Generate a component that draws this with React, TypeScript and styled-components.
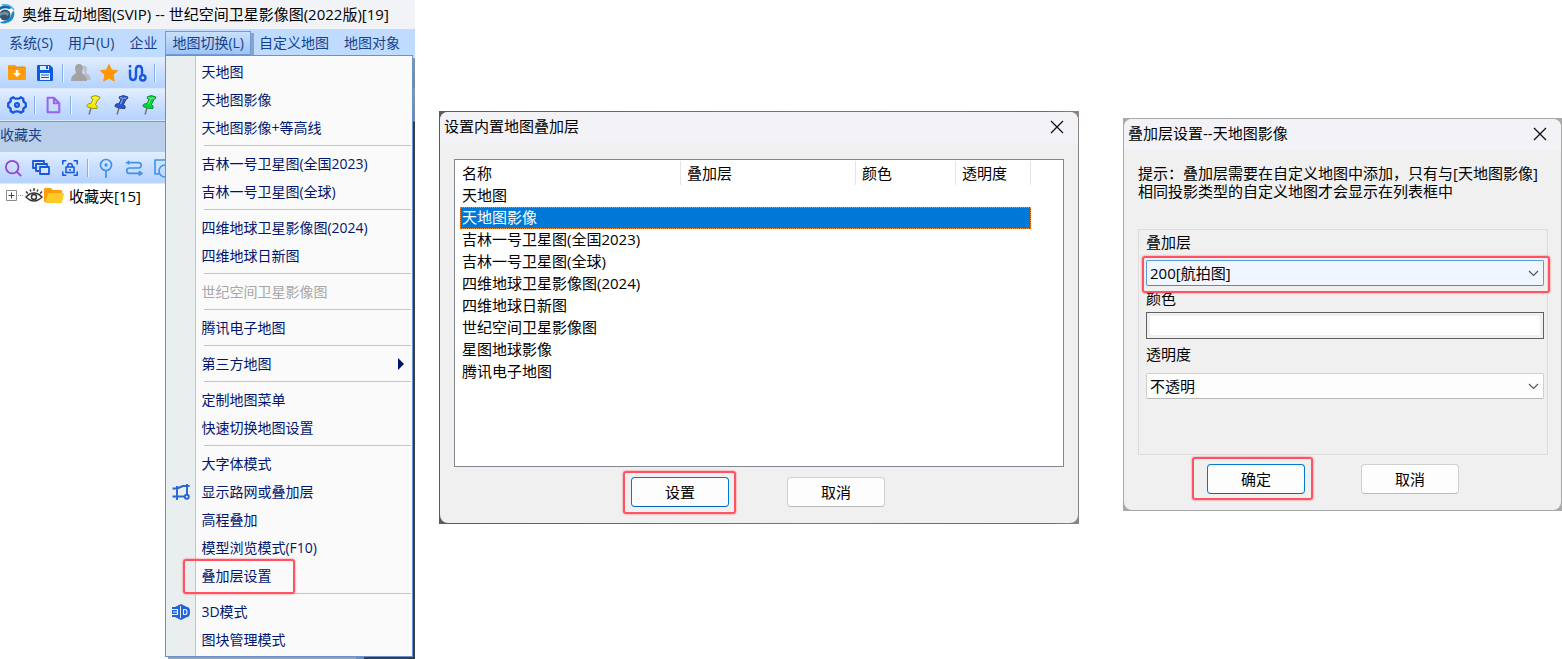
import React from 'react';
import styled, { createGlobalStyle, css } from 'styled-components';

const GlobalStyle = createGlobalStyle`
  *, *::before, *::after { box-sizing: border-box; }
  body {
    margin: 0;
    background: #fff;
    color: #000;
    font-family: "Open Sans", "Noto Sans CJK SC", sans-serif;
    font-size: 15px;
    line-height: 18px;
  }
  button, select, input { font: inherit; color: inherit; }
  ul { margin: 0; padding: 0; list-style: none; }
  h1, h2, p { margin: 0; font-size: 15px; font-weight: 400; }
`;

const Page = styled.main`
  display: grid;
  grid-template-columns: minmax(0, 415fr) minmax(0, 640fr) minmax(0, 459fr);
  column-gap: 24px;
  align-items: start;
`;

/* Red frame that marks the control to click */
const marked = css<{ $mark?: string }>`
  position: relative;
  &::after {
    content: ${(p) => (p.$mark ? '""' : 'none')};
    position: absolute;
    inset: ${(p) => p.$mark};
    border: 2px solid #ff5364;
    border-radius: 3px;
    box-shadow: 0 0 2px #ff5364;
    pointer-events: none;
    z-index: 2;
  }
`;

/* ---------- Main window ---------- */

const AppWindow = styled.section`
  display: flex;
  flex-direction: column;
  min-height: 100vh;
  overflow: hidden;
`;

const AppTitle = styled.header`
  display: flex;
  align-items: center;
  height: 29px;
  gap: 7px;
  padding-bottom: 2px;
  background: #f2f3f7;
  white-space: nowrap;
  svg { flex: none; }
`;

const MenuBar = styled.nav`
  display: flex;
  align-items: flex-start;
  gap: 1px;
  height: 28px;
  padding: 2px 0 0 2px;
  background: #bfdbff;
`;

const MenuSlot = styled.div`
  position: relative;
  flex: none;
`;

const MenuButton = styled.button<{ $open?: boolean }>`
  height: 24px;
  padding: 0 6px;
  border: 1px solid ${(p) => (p.$open ? '#6f9bd8' : 'transparent')};
  background: ${(p) => (p.$open ? 'linear-gradient(#c9e0fd, #9fc4f3)' : 'transparent')};
  box-shadow: ${(p) => (p.$open ? '3px 2px 0 #8ba3c4' : 'none')};
  color: #15428b;
  font-size: 14px;
  line-height: 22px;
  white-space: nowrap;
`;

const DropDown = styled.ul`
  position: absolute;
  top: 24px;
  left: 0;
  z-index: 5;
  width: 248px;
  padding: 2px 1px;
  border: 1px solid #6593cf;
  background: linear-gradient(90deg, #e9eeee 29px, #c5c5c5 29px, #c5c5c5 30px, #fafafa 30px);
  box-shadow: 3px 3px 0 rgba(40, 40, 50, 0.45);
`;

const MenuItem = styled.li<{ $mark?: string }>`
  ${marked}
`;

const ItemButton = styled.button`
  display: flex;
  align-items: center;
  width: 100%;
  height: 28px;
  padding: 0 6px 0 0;
  border: 0;
  background: none;
  color: #00156e;
  font-size: 14px;
  text-align: left;
  &:disabled { color: #a7a7a7; }
`;

const ItemIcon = styled.span`
  display: flex;
  justify-content: center;
  flex: none;
  width: 28px;
  margin-right: 6px;
`;

const ItemLabel = styled.span`
  flex: 1;
`;

const Separator = styled.li`
  height: 8px;
  padding-top: 3px;
  &::before {
    content: "";
    display: block;
    margin-left: 37px;
    border-top: 1px solid #c5c5c5;
  }
`;

const Toolbar = styled.div<{ $start?: boolean }>`
  display: flex;
  align-items: center;
  height: 32px;
  padding-left: ${(p) => (p.$start ? '0' : '3px')};
  border-bottom: 1px solid #d9e8fb;
  background: linear-gradient(#e3efff, #cbe0ff 45%, #b5d3ff);
`;

const ToolButton = styled.button`
  display: flex;
  align-items: center;
  justify-content: center;
  flex: none;
  width: 28px;
  height: 28px;
  padding: 0;
  border: 0;
  background: none;
`;

const ToolDivider = styled.span<{ $wide?: boolean }>`
  flex: none;
  width: 1px;
  height: 18px;
  margin: 0 ${(p) => (p.$wide ? '8px' : '4px')} 0 3px;
  background: #86aee6;
  box-shadow: 1px 0 0 #eef5ff;
`;

const Workspace = styled.div`
  display: flex;
  flex: 1;
  border-top: 1px solid #6a9ae0;
  background: #4b5052;
`;

const SidePanel = styled.aside`
  flex: none;
  width: 364px;
  border-right: 8px solid #bfdbff;
  background: #fff;
`;

const PanelTitle = styled.h2`
  height: 30px;
  background: #b9cfea;
  color: #15428b;
  font-size: 14px;
  line-height: 26px;
`;

const TreeRow = styled.div`
  display: flex;
  align-items: center;
  height: 24px;
  padding-left: 6px;
  span { margin-left: 5px; }
`;

/* ---------- Dialogs ---------- */

const DialogFrame = styled.section<{ $top: number; $left?: number; $edge: string }>`
  margin: ${(p) => p.$top}px 0 0 ${(p) => p.$left || 0}px;
  padding: 1px;
  background: ${(p) => p.$edge};
`;

const DialogBody = styled.div`
  border-radius: 8px;
  background: #f0f0f0;
`;

const DialogTitle = styled.header`
  display: flex;
  align-items: center;
  justify-content: space-between;
  height: 31px;
  padding: 0 14px 3px 4px;
  border-radius: 8px 8px 0 0;
  background: #f3f2f6;
`;

const CloseButton = styled.button`
  display: flex;
  padding: 2px 0 0;
  border: 0;
  background: none;
`;

const ListBox = styled.div`
  height: 308px;
  margin: 16px 14px 0;
  padding-left: 5px;
  overflow: hidden;
  border: 1px solid #828790;
  background: #fff;
`;

const ListTable = styled.table`
  width: 571px;
  table-layout: fixed;
  border-collapse: separate;
  border-spacing: 0;
  th {
    height: 25px;
    padding: 0 0 0 6px;
    font-weight: 400;
    text-align: left;
    background: linear-gradient(#e5e5e5, #e5e5e5) right 1px / 1px 24px no-repeat;
  }
  th:first-child { padding-left: 2px; }
  td { padding: 0 0 2px 2px; }
`;

const ListRow = styled.tr<{ $selected?: boolean }>`
  height: 22px;
  ${(p) =>
    p.$selected &&
    css`
      color: #fff;
      background: #0078d7;
      outline: 1px dotted #ff8728;
      outline-offset: -1px;
    `}
`;

const Footer = styled.footer<{ $gap: number; $shift?: boolean }>`
  display: flex;
  justify-content: center;
  gap: ${(p) => p.$gap}px;
  padding: ${(p) => (p.$shift ? '9px 19px 16px 0' : '10px 2px 16px 0')};
`;

const PushButton = styled.button<{ $primary?: boolean; $mark?: string }>`
  width: 98px;
  height: 30px;
  padding: 0;
  border: 1px solid ${(p) => (p.$primary ? '#0078d4' : '#d0d0d0')};
  border-bottom-color: ${(p) => (p.$primary ? '#0067c0' : '#bbb')};
  border-radius: 4px;
  background: #fdfdfd;
  ${marked}
`;

const Hint = styled.p`
  padding: 14px 0 0 14px;
  white-space: nowrap;
`;

const Group = styled.form`
  display: flex;
  flex-direction: column;
  height: 226px;
  margin: 29px 13px 0 14px;
  padding: 0 3px 0 7px;
  border: 1px solid #dcdcdc;
`;

const FieldLabel = styled.label<{ $height: number; $line: number }>`
  height: ${(p) => p.$height}px;
  line-height: ${(p) => p.$line}px;
`;

const SelectWrap = styled.div<{ $mark?: string }>`
  display: flex;
  ${marked}
  svg {
    position: absolute;
    top: 9px;
    right: 5px;
    pointer-events: none;
  }
`;

const Select = styled.select<{ $active?: boolean }>`
  appearance: none;
  width: 100%;
  height: 26px;
  padding: 0 24px 0 3px;
  border: 1px solid ${(p) => (p.$active ? '#5a9bd8' : '#d0d0d0')};
  border-bottom-color: ${(p) => (p.$active ? '#4a8ccb' : '#b8b8b8')};
  border-radius: 2px;
  background: ${(p) => (p.$active ? '#f0f6ff' : '#fdfdfd')};
`;

const ColorInput = styled.input`
  appearance: none;
  width: 100%;
  height: 27px;
  padding: 3px;
  border: 1px solid #606060;
  background: #f0f0f0;
  &::-webkit-color-swatch-wrapper { padding: 0; }
  &::-webkit-color-swatch { border: 0; border-radius: 0; }
`;

/* ---------- Drawings ---------- */

const BLUE = '#1657dc';

const Stroke = ({ size = 20, color = BLUE, width = 2, children }: {
  size?: number; color?: string; width?: number; children: React.ReactNode;
}) => (
  <svg width={size} height={size} viewBox="0 0 20 20" fill="none" stroke={color} strokeWidth={width} strokeLinejoin="round" aria-hidden="true">
    {children}
  </svg>
);

const Logo = () => (
  <svg width="15" height="20" viewBox="0 0 15 20" aria-hidden="true">
    <circle cx="5" cy="10" r="9" fill="#fff" />
    <path d="M0 3Q6-1 12 4L9 5Q4 3 0 6Z" fill="#1262a8" />
    <path d="M2 1Q9-1 14 6" fill="none" stroke="#45b3ec" strokeWidth="1.500" />
    <circle cx="5" cy="11" r="5.500" fill="#36566f" />
    <path d="M0 9Q5 6 9 9L8 12Q4 9 0 12Z" fill="#6d8fa5" />
    <path d="M14 7Q16 17 5 19.500Q1 20 0 18Q11 17 12 8Z" fill="#1688cf" />
  </svg>
);

const FolderDown = () => (
  <svg width="20" height="20" viewBox="0 0 20 20" aria-hidden="true">
    <path d="M1 3Q1 2 2 2H8L10 4H18Q19 4 19 5V16Q19 17 18 17H2Q1 17 1 16Z" fill="#ff9d0a" />
    <path d="M1 5H9L10 4H18" fill="none" stroke="#d98a16" />
    <path d="M8.800 7h2.400v3H14l-4 4-4-4h2.800z" fill="#fff" />
  </svg>
);

const Save = () => (
  <svg width="18" height="18" viewBox="0 0 18 18" aria-hidden="true">
    <path d="M1 2Q1 1 2 1H14L17 4V16Q17 17 16 17H2Q1 17 1 16Z" fill="#0d5be0" />
    <path d="M4 2H13V6H4Z" fill="#dceaff" />
    <path d="M10 2H12V5H10Z" fill="#0d5be0" />
    <path d="M4 9H14V16H4Z" fill="#e8f1ff" />
    <path d="M5 11H13M5 13.500H13" stroke="#0d5be0" />
  </svg>
);

const Users = () => (
  <svg width="22" height="20" viewBox="0 0 22 20" aria-hidden="true">
    <path d="M13 3c4-1 5 3 3 6 0 2 5 2 5 8h-5z" fill="#bdbdbd" />
    <path d="M9 1c4 0 5 4 3 8 0 3 5 2 5 9H1c0-7 5-6 5-9C4 5 5 1 9 1z" fill="#a3a3a3" />
  </svg>
);

const Star = () => (
  <svg width="20" height="20" viewBox="0 0 20 20" aria-hidden="true">
    <path d="M10 1.500l2.600 5.500 6 .700-4.500 4.200 1.200 6.100L10 15.200 4.700 18l1.200-6.100L1.400 7.700 7.400 7z" fill="#ff9800" stroke="#ff9800" strokeLinejoin="round" />
  </svg>
);

const Route = () => (
  <Stroke width={2.4}>
    <path d="M3 6.500V13Q3 17 6 17T9 13V7Q9 3 12 3T15 7V11.500" />
    <circle cx="15.800" cy="14.800" r="2.700" />
    <path d="M3 2V4.500" />
  </Stroke>
);

const Gear = () => (
  <Stroke width={2.3}>
    <path d="M6.300 2.200Q7 3.700 10 3.700T13.700 2.200L16.300 3.700Q15.500 6.800 18.800 8.200V11.800Q15.500 13.200 16.300 16.300L13.700 17.800Q13 16.300 10 16.300T6.300 17.800L3.700 16.300Q4.500 13.200 1.200 11.800V8.200Q4.500 6.800 3.700 3.700Z" />
    <circle cx="10" cy="10" r="1.900" />
  </Stroke>
);

const FileIcon = () => (
  <Stroke size={18} color="#9a62ee" width={2.3}>
    <path d="M4 2H11L17 8V18H4ZM11 2V8H17" />
  </Stroke>
);

const Pin = ({ color, edge }: { color: string; edge: string }) => (
  <svg width="18" height="22" viewBox="0 0 18 22" aria-hidden="true">
    <path d="M7 14L5 20.500" stroke="#777" strokeWidth="1.500" />
    <path d="M7 3Q11 0 16 3Q16 5 14 5.500L11.500 10.500Q14 12 13 14.500Q7 15 3 12.500Q2.500 9.500 7 9.500L9 5.500Q7 5 7 3Z" fill={color} stroke={edge} strokeWidth="0.800" />
    <path d="M8 3.500Q11 5 14.500 4M10.500 5.500L8.500 10" fill="none" stroke="#fff" opacity="0.550" />
  </svg>
);

const Search = () => (
  <Stroke size={18} color="#9440d8" width={2}>
    <circle cx="8" cy="9" r="7" /><path d="M13 14L18 19" />
  </Stroke>
);

const Layers = () => (
  <Stroke size={20} width={1.8}>
    <path d="M4 10H1V3H12V5" /><path d="M7 13H4V6H15V8" /><path d="M8 9H17V16H8Z" fill="#d3e5ff" />
  </Stroke>
);

const LockFrame = () => (
  <Stroke size={18} width={1.7}>
    <path d="M2 6V2H6M14 2H18V6M18 14V18H14M6 18H2V14" />
    <path d="M5.500 9H14.500V15H5.500ZM7.500 9V7.500Q7.500 5 10 5T12.500 7.500V9M10 11V13" />
  </Stroke>
);

const PointPin = () => (
  <Stroke color="#3f92e8" width={1.7}>
    <circle cx="10" cy="7" r="5.500" /><circle cx="10" cy="7" r="0.800" /><path d="M10 12.500V20" />
  </Stroke>
);

const Path = () => (
  <Stroke size={18} color="#3f92e8" width={1.8}>
    <path d="M4 4H15Q18 4 18 7T15 10H5Q2 10 2 13T5 16H16" />
    <path d="M1 4H4M4 2V6M16 14V18L19 16Z" />
  </Stroke>
);

const Shapes = () => (
  <Stroke color="#3f92e8" width={1.6}>
    <path d="M7 16H3V2H17V7" /><circle cx="13" cy="13" r="6" />
  </Stroke>
);

const Expander = () => (
  <svg width="18" height="12" viewBox="0 0 18 12" aria-hidden="true">
    <path d="M0.500 0.500H10.500V10.500H0.500Z" fill="#fff" stroke="#8a8a8a" />
    <path d="M2.500 5.500H8.500M5.500 2.500V8.500" stroke="#23459c" />
    <path d="M12 5.500H18" stroke="#888" strokeDasharray="1 1" />
  </svg>
);

const Eye = () => (
  <svg width="20" height="18" viewBox="0 0 20 18" fill="none" stroke="#333" strokeWidth="1.400" aria-hidden="true">
    <path d="M2 10Q10 2 18 10Q10 18 2 10Z" />
    <circle cx="10" cy="10" r="2.500" />
    <path d="M2 4.500L4 6.500M6 2.500L7 4.500M10 1V4M14 2.500L13 4.500M18 4.500L16 6.500" />
  </svg>
);

const Folder = () => (
  <svg width="20" height="18" viewBox="0 0 20 18" aria-hidden="true">
    <path d="M0 2Q0 1 1 1H7L9 3H17Q18 3 18 4V15H1Q0 15 0 14Z" fill="#ff9d0a" />
    <path d="M4 6H19Q20 6 20 7L18 15Q18 16 17 16H1Z" fill="#ffca28" />
  </svg>
);

const Roads = () => (
  <Stroke width={1.9} color="#2a63d6">
    <path d="M1.500 6.500H6L12 4H18.500M1.500 14.500H13.500M6 4V18M16 2V12.500" />
    <circle cx="15.800" cy="14.800" r="2" />
  </Stroke>
);

const ThreeD = () => (
  <svg width="20" height="18" viewBox="0 0 20 18" fill="none" aria-hidden="true">
    <path d="M4 4L10 1L16 4M4 14L10 17L16 14" fill="#1d62e0" />
    <path d="M1 4H16Q19 4 19 9T16 14H1Z" fill="#1d62e0" />
    <path d="M1 6.500H6.500V11.500H1M2 9H6" stroke="#e9eeee" strokeWidth="1.200" />
    <path d="M9.500 3V15" stroke="#e9eeee" />
    <path d="M12.500 6.500H14Q16 6.500 16 9T14 11.500H12.500Z" stroke="#e9eeee" strokeWidth="1.200" />
  </svg>
);

const Close = () => (
  <svg width="14" height="14" viewBox="0 0 14 14" aria-hidden="true">
    <path d="M1 1L13 13M13 1L1 13" stroke="#111" strokeWidth="1.300" />
  </svg>
);

const Chevron = () => (
  <svg width="11" height="8" viewBox="0 0 11 8" fill="none" aria-hidden="true">
    <path d="M1 2L5.500 6.500L10 2" stroke="#555" strokeWidth="1.200" />
  </svg>
);

const Arrow = () => (
  <svg width="7" height="12" viewBox="0 0 7 12" aria-hidden="true">
    <path d="M0 0L6 6L0 12Z" fill="#00156e" />
  </svg>
);

/* ---------- Data ---------- */

type Entry = { label: string; icon?: React.ReactNode; disabled?: boolean; sub?: boolean; mark?: string };

const menuGroups: Entry[][] = [
  [{ label: '天地图' }, { label: '天地图影像' }, { label: '天地图影像+等高线' }],
  [{ label: '吉林一号卫星图(全国2023)' }, { label: '吉林一号卫星图(全球)' }],
  [{ label: '四维地球卫星影像图(2024)' }, { label: '四维地球日新图' }],
  [{ label: '世纪空间卫星影像图', disabled: true }],
  [{ label: '腾讯电子地图' }],
  [{ label: '第三方地图', sub: true }],
  [{ label: '定制地图菜单' }, { label: '快速切换地图设置' }],
  [
    { label: '大字体模式' },
    { label: '显示路网或叠加层', icon: <Roads /> },
    { label: '高程叠加' },
    { label: '模型浏览模式(F10)' },
    { label: '叠加层设置', mark: '-3px 116px -4px 16px' },
  ],
  [{ label: '3D模式', icon: <ThreeD /> }, { label: '图块管理模式' }],
];

const mapNames = [
  '天地图',
  '天地图影像',
  '吉林一号卫星图(全国2023)',
  '吉林一号卫星图(全球)',
  '四维地球卫星影像图(2024)',
  '四维地球日新图',
  '世纪空间卫星影像图',
  '星图地球影像',
  '腾讯电子地图',
];

const MapMenu = () => (
  <DropDown role="menu" aria-label="地图切换">
    {menuGroups.map((group, g) => (
      <React.Fragment key={g}>
        {g > 0 && <Separator role="separator" />}
        {group.map((item) => (
          <MenuItem key={item.label} role="none" $mark={item.mark}>
            <ItemButton role="menuitem" disabled={item.disabled}>
              <ItemIcon>{item.icon}</ItemIcon>
              <ItemLabel>{item.label}</ItemLabel>
              {item.sub && <Arrow />}
            </ItemButton>
          </MenuItem>
        ))}
      </React.Fragment>
    ))}
  </DropDown>
);

const MainWindow = () => (
  <AppWindow>
    <AppTitle>
      <Logo />
      <h1>奥维互动地图(SVIP) -- 世纪空间卫星影像图(2022版)[19]</h1>
    </AppTitle>
    <MenuBar>
      <MenuSlot><MenuButton>系统(S)</MenuButton></MenuSlot>
      <MenuSlot><MenuButton>用户(U)</MenuButton></MenuSlot>
      <MenuSlot><MenuButton>企业</MenuButton></MenuSlot>
      <MenuSlot>
        <MenuButton $open aria-haspopup="menu" aria-expanded="true">地图切换(L)</MenuButton>
        <MapMenu />
      </MenuSlot>
      <MenuSlot><MenuButton>自定义地图</MenuButton></MenuSlot>
      <MenuSlot><MenuButton>地图对象</MenuButton></MenuSlot>
    </MenuBar>
    <Toolbar>
      <ToolButton aria-label="导入"><FolderDown /></ToolButton>
      <ToolButton aria-label="保存"><Save /></ToolButton>
      <ToolDivider />
      <ToolButton aria-label="用户"><Users /></ToolButton>
      <ToolButton aria-label="收藏"><Star /></ToolButton>
      <ToolButton aria-label="轨迹"><Route /></ToolButton>
      <ToolDivider />
    </Toolbar>
    <Toolbar>
      <ToolButton aria-label="设置"><Gear /></ToolButton>
      <ToolDivider $wide={false} />
      <ToolButton aria-label="文件"><FileIcon /></ToolButton>
      <ToolDivider $wide />
      <ToolButton aria-label="黄色图钉"><Pin color="#f4ea00" edge="#8d8600" /></ToolButton>
      <ToolButton aria-label="蓝色图钉"><Pin color="#2f56c8" edge="#1d3277" /></ToolButton>
      <ToolButton aria-label="绿色图钉"><Pin color="#00d83c" edge="#0a7a27" /></ToolButton>
    </Toolbar>
    <Workspace>
      <SidePanel>
        <PanelTitle>收藏夹</PanelTitle>
        <Toolbar $start>
          <ToolButton aria-label="搜索"><Search /></ToolButton>
          <ToolButton aria-label="图层"><Layers /></ToolButton>
          <ToolButton aria-label="锁定"><LockFrame /></ToolButton>
          <ToolDivider />
          <ToolButton aria-label="标签"><PointPin /></ToolButton>
          <ToolButton aria-label="路径"><Path /></ToolButton>
          <ToolButton aria-label="图形"><Shapes /></ToolButton>
        </Toolbar>
        <TreeRow>
          <Expander />
          <Eye />
          <Folder />
          <span>收藏夹[15]</span>
        </TreeRow>
      </SidePanel>
    </Workspace>
  </AppWindow>
);

const OverlayListDialog = () => (
  <DialogFrame $top={111} $edge="linear-gradient(90deg, #5c5c5c, #777 60%, #6b6b6b 95%, #8d8582)" role="dialog" aria-labelledby="list-title">
    <DialogBody>
      <DialogTitle>
        <h2 id="list-title">设置内置地图叠加层</h2>
        <CloseButton aria-label="关闭"><Close /></CloseButton>
      </DialogTitle>
      <ListBox>
        <ListTable>
          <colgroup>
            <col width="221" /><col width="175" /><col width="100" /><col width="75" />
          </colgroup>
          <thead>
            <tr><th>名称</th><th>叠加层</th><th>颜色</th><th>透明度</th></tr>
          </thead>
          <tbody>
            {mapNames.map((name, i) => (
              <ListRow key={name} $selected={i === 1}>
                <td>{name}</td><td /><td /><td />
              </ListRow>
            ))}
          </tbody>
        </ListTable>
      </ListBox>
      <Footer $gap={58}>
        <PushButton $primary $mark="-7px -8px -8px -9px">设置</PushButton>
        <PushButton>取消</PushButton>
      </Footer>
    </DialogBody>
  </DialogFrame>
);

const OverlaySettingsDialog = () => (
  <DialogFrame $top={118} $left={20} $edge="#a9a9a9" role="dialog" aria-labelledby="settings-title">
    <DialogBody>
      <DialogTitle>
        <h2 id="settings-title">叠加层设置--天地图影像</h2>
        <CloseButton aria-label="关闭"><Close /></CloseButton>
      </DialogTitle>
      <Hint>
        提示：叠加层需要在自定义地图中添加，只有与[天地图影像]
        <br />
        相同投影类型的自定义地图才会显示在列表框中
      </Hint>
      <Group>
        <FieldLabel htmlFor="layer" $height={30} $line={24}>叠加层</FieldLabel>
        <SelectWrap $mark="-4px -6px -7px -4px">
          <Select id="layer" $active defaultValue="200">
            <option value="200">200[航拍图]</option>
          </Select>
          <Chevron />
        </SelectWrap>
        <FieldLabel htmlFor="color" $height={26} $line={24}>颜色</FieldLabel>
        <ColorInput id="color" type="color" defaultValue="#ffffff" />
        <FieldLabel htmlFor="opacity" $height={34} $line={30}>透明度</FieldLabel>
        <SelectWrap>
          <Select id="opacity" defaultValue="100">
            <option value="100">不透明</option>
          </Select>
          <Chevron />
        </SelectWrap>
      </Group>
      <Footer $gap={56} $shift>
        <PushButton $primary $mark="-8px -9px -7px -16px">确定</PushButton>
        <PushButton>取消</PushButton>
      </Footer>
    </DialogBody>
  </DialogFrame>
);

export default function App() {
  return (
    <>
      <GlobalStyle />
      <Page>
        <MainWindow />
        <OverlayListDialog />
        <OverlaySettingsDialog />
      </Page>
    </>
  );
}
